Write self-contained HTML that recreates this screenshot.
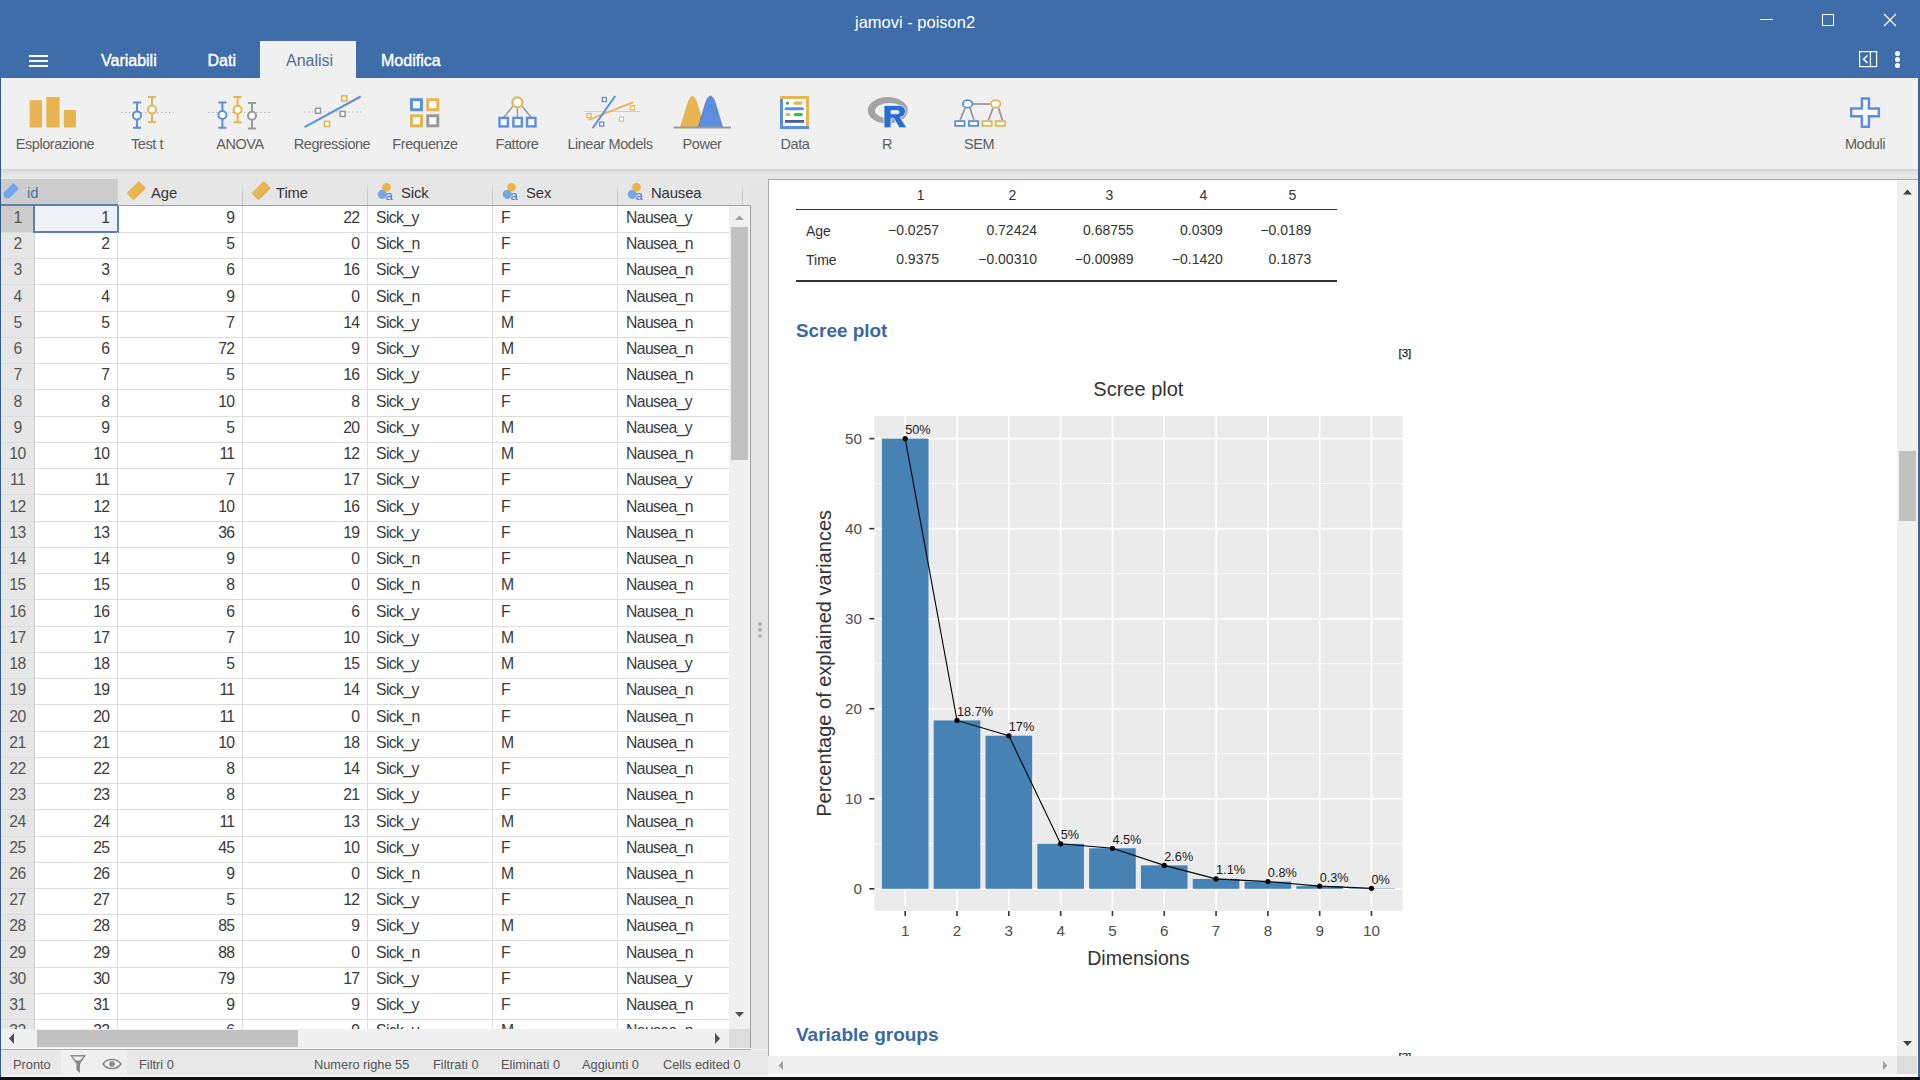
<!DOCTYPE html>
<html><head><meta charset="utf-8"><title>jamovi - poison2</title>
<style>
*{box-sizing:border-box;margin:0;padding:0}
html,body{width:1920px;height:1080px;overflow:hidden;background:#f0f0f0;font-family:"Liberation Sans",sans-serif;}
.a{position:absolute}
.t{position:absolute;white-space:pre;line-height:1}
</style></head><body>

<div class="a" style="left:0;top:0;width:1920px;height:78px;background:#3e6da9"></div>
<div class="t" style="left:855px;top:13.5px;font-size:16.5px;color:#fff">jamovi - poison2</div>
<div class="a" style="left:1760px;top:19px;width:13px;height:1px;background:#fff"></div>
<div class="a" style="left:1822px;top:14px;width:12px;height:12px;border:1px solid #fff"></div>
<svg class="a" style="left:1883px;top:13px" width="14" height="14"><path d="M1 1L13 13M13 1L1 13" stroke="#fff" stroke-width="1.2"/></svg>
<div class="a" style="left:29px;top:55px;width:19px;height:2px;background:#fff"></div>
<div class="a" style="left:29px;top:60px;width:19px;height:2px;background:#fff"></div>
<div class="a" style="left:29px;top:65px;width:19px;height:2px;background:#fff"></div>
<div class="a" style="left:260px;top:41px;width:96px;height:37px;background:#f0f0f0"></div>
<div class="t" style="left:101px;top:53.3px;font-size:16px;-webkit-text-stroke:0.4px #fff;color:#fff">Variabili</div>
<div class="t" style="left:207.5px;top:53.3px;font-size:16px;-webkit-text-stroke:0.4px #fff;color:#fff">Dati</div>
<div class="t" style="left:286px;top:53.3px;font-size:16px;color:#4f6d99">Analisi</div>
<div class="t" style="left:381px;top:53.3px;font-size:16px;-webkit-text-stroke:0.4px #fff;color:#fff">Modifica</div>
<svg class="a" style="left:1858px;top:50px" width="20" height="18"><rect x="1.6" y="1.6" width="17" height="15" fill="none" stroke="#fff" stroke-width="1.2"/><path d="M12.4 1.6V16.6" stroke="#fff" stroke-width="1.2"/><path d="M9.5 5.5L5.5 9.2L9.5 12.9" fill="none" stroke="#fff" stroke-width="1.5"/></svg>
<div class="a" style="left:1895px;top:51px;width:5px;height:5px;border-radius:50%;background:#fff"></div>
<div class="a" style="left:1895px;top:57px;width:5px;height:5px;border-radius:50%;background:#fff"></div>
<div class="a" style="left:1895px;top:63px;width:5px;height:5px;border-radius:50%;background:#fff"></div>
<div class="a" style="left:0;top:78px;width:1920px;height:91px;background:#f0f0f0"></div>
<div class="a" style="left:0;top:169px;width:1920px;height:10px;background:linear-gradient(#d2d2d2 0px,#e6e6e6 5px,#e6e6e6 10px)"></div>
<div class="t" style="left:-5px;width:120px;text-align:center;top:136.5px;font-size:14.5px;letter-spacing:-0.45px;color:#5e5e5e">Esplorazione</div>
<div class="t" style="left:87px;width:120px;text-align:center;top:136.5px;font-size:14.5px;letter-spacing:-0.45px;color:#5e5e5e">Test t</div>
<div class="t" style="left:180px;width:120px;text-align:center;top:136.5px;font-size:14.5px;letter-spacing:-0.45px;color:#5e5e5e">ANOVA</div>
<div class="t" style="left:272px;width:120px;text-align:center;top:136.5px;font-size:14.5px;letter-spacing:-0.45px;color:#5e5e5e">Regressione</div>
<div class="t" style="left:365px;width:120px;text-align:center;top:136.5px;font-size:14.5px;letter-spacing:-0.45px;color:#5e5e5e">Frequenze</div>
<div class="t" style="left:457px;width:120px;text-align:center;top:136.5px;font-size:14.5px;letter-spacing:-0.45px;color:#5e5e5e">Fattore</div>
<div class="t" style="left:550px;width:120px;text-align:center;top:136.5px;font-size:14.5px;letter-spacing:-0.45px;color:#5e5e5e">Linear Models</div>
<div class="t" style="left:642px;width:120px;text-align:center;top:136.5px;font-size:14.5px;letter-spacing:-0.45px;color:#5e5e5e">Power</div>
<div class="t" style="left:735px;width:120px;text-align:center;top:136.5px;font-size:14.5px;letter-spacing:-0.45px;color:#5e5e5e">Data</div>
<div class="t" style="left:827px;width:120px;text-align:center;top:136.5px;font-size:14.5px;letter-spacing:-0.45px;color:#5e5e5e">R</div>
<div class="t" style="left:919px;width:120px;text-align:center;top:136.5px;font-size:14.5px;letter-spacing:-0.45px;color:#5e5e5e">SEM</div>
<div class="t" style="left:1805px;width:120px;text-align:center;top:136.5px;font-size:14.5px;letter-spacing:-0.45px;color:#5e5e5e">Moduli</div>
<svg class="a" style="left:0;top:0" width="1920" height="170"><rect x="29.6" y="100.2" width="12.4" height="27.3" fill="#e8b452"/><rect x="46.3" y="97" width="13.3" height="30.5" fill="#e8b452"/><rect x="63.8" y="110" width="12.2" height="17.5" fill="#e8b452"/><path d="M121 112.5H174" stroke="#b8b8b8" stroke-width="1" stroke-dasharray="1.5 2.5"/><path d="M133 102.5H141M137 102.5V111.4M137 119.4V127.7M133 127.7H141" stroke="#5b8fdd" stroke-width="2" fill="none"/><circle cx="137" cy="115.4" r="4" stroke="#5b8fdd" stroke-width="2" fill="#fff"/><path d="M148 97H156M152 97V105.6M152 113.6V122M148 122H156" stroke="#e8b452" stroke-width="2" fill="none"/><circle cx="152" cy="109.6" r="4" stroke="#e8b452" stroke-width="2" fill="#fff"/><path d="M208 112.5H270" stroke="#b8b8b8" stroke-width="1" stroke-dasharray="1.5 2.5"/><path d="M218.4 102.6H226.4M222.4 102.6V111M222.4 119V127.8M218.4 127.8H226.4" stroke="#5b8fdd" stroke-width="2" fill="none"/><circle cx="222.4" cy="115" r="4" stroke="#5b8fdd" stroke-width="2" fill="#fff"/><path d="M233.6 97H241.6M237.6 97V105.7M237.6 113.7V122.3M233.6 122.3H241.6" stroke="#e8b452" stroke-width="2" fill="none"/><circle cx="237.6" cy="109.7" r="4" stroke="#e8b452" stroke-width="2" fill="#fff"/><path d="M248 103H256M252 103V111.8M252 119.8V128.4M248 128.4H256" stroke="#9a9a9a" stroke-width="2" fill="none"/><circle cx="252" cy="115.8" r="4" stroke="#9a9a9a" stroke-width="2" fill="#fff"/><path d="M304 112H362" stroke="#b8b8b8" stroke-width="1" stroke-dasharray="1.5 2.5"/><path d="M304.6 127.1L360.7 96.5" stroke="#5b8fdd" stroke-width="2"/><rect x="315.5" y="108.3" width="5" height="5" fill="#fff" stroke="#9a9a9a" stroke-width="1.6"/><rect x="340.1" y="111.4" width="5" height="5" fill="#fff" stroke="#9a9a9a" stroke-width="1.6"/><rect x="341.8" y="95.9" width="5" height="5" fill="#fff" stroke="#e8b452" stroke-width="1.6"/><rect x="324.5" y="121.4" width="5" height="5" fill="#fff" stroke="#e8b452" stroke-width="1.6"/><rect x="411.5" y="99.7" width="10" height="10" fill="#fff" stroke="#5b8fdd" stroke-width="3"/><rect x="427.8" y="99.7" width="10" height="10" fill="#fff" stroke="#e8b452" stroke-width="3"/><rect x="411.5" y="115.8" width="10" height="10" fill="#fff" stroke="#e8b452" stroke-width="3"/><rect x="427.8" y="115.8" width="10" height="10" fill="#fff" stroke="#9a9a9a" stroke-width="3"/><path d="M513 106L503.7 117.5M517.4 108V117.5M522 106L531.2 117.5" stroke="#9a9a9a" stroke-width="1.5"/><circle cx="517.4" cy="102.3" r="5" fill="#fff" stroke="#e8b452" stroke-width="2.2"/><rect x="499.5" y="117.9" width="8.4" height="8.5" fill="#fff" stroke="#5b8fdd" stroke-width="2.4"/><rect x="513.4000000000001" y="117.9" width="8.4" height="8.5" fill="#fff" stroke="#5b8fdd" stroke-width="2.4"/><rect x="527.1" y="117.9" width="8.4" height="8.5" fill="#fff" stroke="#5b8fdd" stroke-width="2.4"/><path d="M584 111.5H640" stroke="#cfcfcf" stroke-width="1"/><path d="M588.3 120L633 102.3" stroke="#e8b452" stroke-width="1.8" fill="none"/><path d="M592.6 128.2L615.2 96" stroke="#5b8fdd" stroke-width="2"/><rect x="602.3" y="97.5" width="4" height="4" fill="#fff" stroke="#5b8fdd" stroke-width="1.3"/><rect x="599.7" y="122.1" width="4" height="4" fill="#fff" stroke="#5b8fdd" stroke-width="1.3"/><rect x="587.1" y="113.6" width="4" height="4" fill="#fff" stroke="#e8b452" stroke-width="1.3"/><rect x="630.4" y="105.8" width="4" height="4" fill="#fff" stroke="#e8b452" stroke-width="1.3"/><rect x="619.5" y="117.1" width="4" height="4" fill="#fff" stroke="#c4c4c4" stroke-width="1.3"/><path d="M679.8 127.5C686 110 688 96 692.4 96S699 110 705 127.5Z" fill="#e8b452"/><path d="M698 127.5C704 110 706 96 710.4 96S717 110 722.8 127.5Z" fill="#5b8fdd" stroke="#4a74b8" stroke-width="0.6"/><path d="M673.7 127.6H731" stroke="#999" stroke-width="2"/><rect x="781.5" y="97.5" width="26" height="30" fill="#fff"/><path d="M781.5 96V127.5H809" stroke="#5b8fdd" stroke-width="3" fill="none"/><path d="M780 97.5H807.5V126" stroke="#e8b452" stroke-width="3" fill="none"/><circle cx="787.5" cy="103.2" r="1.6" fill="#3aa845"/><rect x="793.5" y="101.6" width="9" height="3.2" rx="1.6" fill="#e8b452"/><rect x="784.5" y="107.2" width="19.5" height="3" rx="1.5" fill="#5b8fdd"/><rect x="785.5" y="113" width="5" height="3.2" rx="1.6" fill="#e8b452"/><rect x="793.8" y="113" width="9" height="3.2" rx="1.6" fill="#2fbf3f"/><rect x="785" y="120" width="19" height="2.8" fill="#4b5a9e"/><path d="M867.8 110.3A20 13.3 0 1 0 907.8 110.3A20 13.3 0 1 0 867.8 110.3ZM875 110.8A14.7 7.8 0 1 0 904.4 110.8A14.7 7.8 0 1 0 875 110.8Z" fill="#a3a3a3" fill-rule="evenodd"/><path d="M884 127.8V105.4H898.5C903.5 105.4 905.5 108.2 905.5 111.3S903.8 116.5 900.2 117.3L906.8 127.8H899.3L893.6 118.3H891V127.8Z M891 110.5V113.8H897C898.3 113.8 899.1 113 899.1 112.1S898.3 110.5 897 110.5Z" fill="#276dd8" fill-rule="evenodd" stroke="#f4f4f4" stroke-width="0.8"/><path d="M973 104H990" stroke="#9a9a9a" stroke-width="1.8"/><path d="M965 108L960.2 120M970 108L974 120M993 108L988.5 120M998.5 108L1002.4 120" stroke="#9a9a9a" stroke-width="1.8"/><ellipse cx="967.6" cy="103.9" rx="4.7" ry="3.8" fill="#fff" stroke="#5b8fdd" stroke-width="1.8"/><ellipse cx="995.7" cy="103.9" rx="4.7" ry="3.8" fill="#fff" stroke="#e8b452" stroke-width="1.8"/><rect x="955.1999999999999" y="121.1" width="9.3" height="4.8" fill="#fff" stroke="#5b8fdd" stroke-width="1.8"/><rect x="968.9" y="121.1" width="9.3" height="4.8" fill="#fff" stroke="#5b8fdd" stroke-width="1.8"/><rect x="982.4" y="121.1" width="9.3" height="4.8" fill="#fff" stroke="#e8b452" stroke-width="1.8"/><rect x="995.6999999999999" y="121.1" width="9.3" height="4.8" fill="#fff" stroke="#e8b452" stroke-width="1.8"/><path d="M1861.9 98.5H1868.9V108.5H1878.8V116.3H1868.9V126.7H1861.9V116.3H1851.2V108.5H1861.9Z" fill="#fff" stroke="#5b8fdd" stroke-width="2.5"/></svg>
<div class="a" style="left:0;top:179px;width:768px;height:870px;background:#e6e6e6"></div>
<div class="a" style="left:0;top:179px;width:118px;height:25px;background:#cccccc"></div>
<div class="a" style="left:0;top:204px;width:118px;height:2px;background:#5b80b2"></div>
<div class="a" style="left:118px;top:205px;width:633px;height:1px;background:#a0a0a0"></div>
<div class="a" style="left:242px;top:184px;width:1px;height:21px;background:linear-gradient(#e6e6e6,#c8c8c8 40%)"></div>
<div class="a" style="left:367px;top:184px;width:1px;height:21px;background:linear-gradient(#e6e6e6,#c8c8c8 40%)"></div>
<div class="a" style="left:492px;top:184px;width:1px;height:21px;background:linear-gradient(#e6e6e6,#c8c8c8 40%)"></div>
<div class="a" style="left:617px;top:184px;width:1px;height:21px;background:linear-gradient(#e6e6e6,#c8c8c8 40%)"></div>
<div class="a" style="left:742px;top:184px;width:1px;height:21px;background:linear-gradient(#e6e6e6,#c8c8c8 40%)"></div>
<div class="t" style="left:27px;top:186px;font-size:14.8px;letter-spacing:-0.1px;color:#4a6fa5">id</div>
<div class="t" style="left:151px;top:186px;font-size:14.8px;letter-spacing:-0.1px;color:#333">Age</div>
<div class="t" style="left:276px;top:186px;font-size:14.8px;letter-spacing:-0.1px;color:#333">Time</div>
<div class="t" style="left:401px;top:186px;font-size:14.8px;letter-spacing:-0.1px;color:#333">Sick</div>
<div class="t" style="left:526px;top:186px;font-size:14.8px;letter-spacing:-0.1px;color:#333">Sex</div>
<div class="t" style="left:651px;top:186px;font-size:14.8px;letter-spacing:-0.1px;color:#333">Nausea</div>
<svg class="a" style="left:0;top:0" width="760" height="210"><path d="M3.7 192.7L13.3 183L19 188.5L9.5 198.2L6 198.2L3.7 195.8Z" fill="#72a2ea"/><g transform="rotate(45 136.2 190.7)"><rect x="131.6" y="182.39999999999998" width="9.2" height="16.6" rx="0.8" fill="#e9b650" stroke="#dba443" stroke-width="0.8"/><path d="M140.79999999999998 185.7h-2.5M140.79999999999998 188.7h-1.6M140.79999999999998 191.7h-2.5M140.79999999999998 194.7h-1.6" stroke="#c8933a" stroke-width="0.7"/></g><g transform="rotate(45 261.2 190.7)"><rect x="256.59999999999997" y="182.39999999999998" width="9.2" height="16.6" rx="0.8" fill="#e9b650" stroke="#dba443" stroke-width="0.8"/><path d="M265.8 185.7h-2.5M265.8 188.7h-1.6M265.8 191.7h-2.5M265.8 194.7h-1.6" stroke="#c8933a" stroke-width="0.7"/></g><circle cx="382.3" cy="194.3" r="4.6" fill="#79a6e3"/><circle cx="386.5" cy="187.2" r="4.3" fill="#e9b546"/><text x="385.5" y="199.5" font-family="Liberation Sans" font-size="13" fill="#4a7bc8">a</text><circle cx="507.3" cy="194.3" r="4.6" fill="#79a6e3"/><circle cx="511.5" cy="187.2" r="4.3" fill="#e9b546"/><text x="510.5" y="199.5" font-family="Liberation Sans" font-size="13" fill="#4a7bc8">a</text><circle cx="632.3" cy="194.3" r="4.6" fill="#79a6e3"/><circle cx="636.5" cy="187.2" r="4.3" fill="#e9b546"/><text x="635.5" y="199.5" font-family="Liberation Sans" font-size="13" fill="#4a7bc8">a</text></svg>
<div class="a" style="left:0;top:206px;width:729px;height:823px;overflow:hidden;background:#fff"><div class="a" style="left:0;top:0;width:34px;height:823px;background:#e6e6e6"></div><div class="a" style="left:0;top:26px;width:729px;height:1px;background:#dcdcdc"></div><div class="a" style="left:0;top:0;width:34px;height:26px;background:#cccccc"></div><div class="a" style="left:33px;top:-2px;width:86px;height:29px;border:2px solid #5b80b2;border-top:none;background:#eef2f8"></div><div class="t" style="left:0;width:35px;text-align:center;top:4px;font-size:15.75px;letter-spacing:-0.62px;color:#555">1</div><div class="t" style="left:34px;width:75.5px;text-align:right;top:4px;font-size:15.75px;letter-spacing:-0.62px;color:#3a3a3a">1</div><div class="t" style="left:118px;width:116.5px;text-align:right;top:4px;font-size:15.75px;letter-spacing:-0.62px;color:#3a3a3a">9</div><div class="t" style="left:243px;width:116.5px;text-align:right;top:4px;font-size:15.75px;letter-spacing:-0.62px;color:#3a3a3a">22</div><div class="t" style="left:376px;top:4px;font-size:15.75px;letter-spacing:-0.62px;color:#3a3a3a">Sick_y</div><div class="t" style="left:501px;top:4px;font-size:15.75px;letter-spacing:-0.62px;color:#3a3a3a">F</div><div class="t" style="left:626px;top:4px;font-size:15.75px;letter-spacing:-0.62px;color:#3a3a3a">Nausea_y</div><div class="a" style="left:0;top:52px;width:729px;height:1px;background:#dcdcdc"></div><div class="t" style="left:0;width:35px;text-align:center;top:30px;font-size:15.75px;letter-spacing:-0.62px;color:#555">2</div><div class="t" style="left:34px;width:75.5px;text-align:right;top:30px;font-size:15.75px;letter-spacing:-0.62px;color:#3a3a3a">2</div><div class="t" style="left:118px;width:116.5px;text-align:right;top:30px;font-size:15.75px;letter-spacing:-0.62px;color:#3a3a3a">5</div><div class="t" style="left:243px;width:116.5px;text-align:right;top:30px;font-size:15.75px;letter-spacing:-0.62px;color:#3a3a3a">0</div><div class="t" style="left:376px;top:30px;font-size:15.75px;letter-spacing:-0.62px;color:#3a3a3a">Sick_n</div><div class="t" style="left:501px;top:30px;font-size:15.75px;letter-spacing:-0.62px;color:#3a3a3a">F</div><div class="t" style="left:626px;top:30px;font-size:15.75px;letter-spacing:-0.62px;color:#3a3a3a">Nausea_n</div><div class="a" style="left:0;top:78px;width:729px;height:1px;background:#dcdcdc"></div><div class="t" style="left:0;width:35px;text-align:center;top:56px;font-size:15.75px;letter-spacing:-0.62px;color:#555">3</div><div class="t" style="left:34px;width:75.5px;text-align:right;top:56px;font-size:15.75px;letter-spacing:-0.62px;color:#3a3a3a">3</div><div class="t" style="left:118px;width:116.5px;text-align:right;top:56px;font-size:15.75px;letter-spacing:-0.62px;color:#3a3a3a">6</div><div class="t" style="left:243px;width:116.5px;text-align:right;top:56px;font-size:15.75px;letter-spacing:-0.62px;color:#3a3a3a">16</div><div class="t" style="left:376px;top:56px;font-size:15.75px;letter-spacing:-0.62px;color:#3a3a3a">Sick_y</div><div class="t" style="left:501px;top:56px;font-size:15.75px;letter-spacing:-0.62px;color:#3a3a3a">F</div><div class="t" style="left:626px;top:56px;font-size:15.75px;letter-spacing:-0.62px;color:#3a3a3a">Nausea_n</div><div class="a" style="left:0;top:105px;width:729px;height:1px;background:#dcdcdc"></div><div class="t" style="left:0;width:35px;text-align:center;top:83px;font-size:15.75px;letter-spacing:-0.62px;color:#555">4</div><div class="t" style="left:34px;width:75.5px;text-align:right;top:83px;font-size:15.75px;letter-spacing:-0.62px;color:#3a3a3a">4</div><div class="t" style="left:118px;width:116.5px;text-align:right;top:83px;font-size:15.75px;letter-spacing:-0.62px;color:#3a3a3a">9</div><div class="t" style="left:243px;width:116.5px;text-align:right;top:83px;font-size:15.75px;letter-spacing:-0.62px;color:#3a3a3a">0</div><div class="t" style="left:376px;top:83px;font-size:15.75px;letter-spacing:-0.62px;color:#3a3a3a">Sick_n</div><div class="t" style="left:501px;top:83px;font-size:15.75px;letter-spacing:-0.62px;color:#3a3a3a">F</div><div class="t" style="left:626px;top:83px;font-size:15.75px;letter-spacing:-0.62px;color:#3a3a3a">Nausea_n</div><div class="a" style="left:0;top:131px;width:729px;height:1px;background:#dcdcdc"></div><div class="t" style="left:0;width:35px;text-align:center;top:109px;font-size:15.75px;letter-spacing:-0.62px;color:#555">5</div><div class="t" style="left:34px;width:75.5px;text-align:right;top:109px;font-size:15.75px;letter-spacing:-0.62px;color:#3a3a3a">5</div><div class="t" style="left:118px;width:116.5px;text-align:right;top:109px;font-size:15.75px;letter-spacing:-0.62px;color:#3a3a3a">7</div><div class="t" style="left:243px;width:116.5px;text-align:right;top:109px;font-size:15.75px;letter-spacing:-0.62px;color:#3a3a3a">14</div><div class="t" style="left:376px;top:109px;font-size:15.75px;letter-spacing:-0.62px;color:#3a3a3a">Sick_y</div><div class="t" style="left:501px;top:109px;font-size:15.75px;letter-spacing:-0.62px;color:#3a3a3a">M</div><div class="t" style="left:626px;top:109px;font-size:15.75px;letter-spacing:-0.62px;color:#3a3a3a">Nausea_n</div><div class="a" style="left:0;top:157px;width:729px;height:1px;background:#dcdcdc"></div><div class="t" style="left:0;width:35px;text-align:center;top:135px;font-size:15.75px;letter-spacing:-0.62px;color:#555">6</div><div class="t" style="left:34px;width:75.5px;text-align:right;top:135px;font-size:15.75px;letter-spacing:-0.62px;color:#3a3a3a">6</div><div class="t" style="left:118px;width:116.5px;text-align:right;top:135px;font-size:15.75px;letter-spacing:-0.62px;color:#3a3a3a">72</div><div class="t" style="left:243px;width:116.5px;text-align:right;top:135px;font-size:15.75px;letter-spacing:-0.62px;color:#3a3a3a">9</div><div class="t" style="left:376px;top:135px;font-size:15.75px;letter-spacing:-0.62px;color:#3a3a3a">Sick_y</div><div class="t" style="left:501px;top:135px;font-size:15.75px;letter-spacing:-0.62px;color:#3a3a3a">M</div><div class="t" style="left:626px;top:135px;font-size:15.75px;letter-spacing:-0.62px;color:#3a3a3a">Nausea_n</div><div class="a" style="left:0;top:183px;width:729px;height:1px;background:#dcdcdc"></div><div class="t" style="left:0;width:35px;text-align:center;top:161px;font-size:15.75px;letter-spacing:-0.62px;color:#555">7</div><div class="t" style="left:34px;width:75.5px;text-align:right;top:161px;font-size:15.75px;letter-spacing:-0.62px;color:#3a3a3a">7</div><div class="t" style="left:118px;width:116.5px;text-align:right;top:161px;font-size:15.75px;letter-spacing:-0.62px;color:#3a3a3a">5</div><div class="t" style="left:243px;width:116.5px;text-align:right;top:161px;font-size:15.75px;letter-spacing:-0.62px;color:#3a3a3a">16</div><div class="t" style="left:376px;top:161px;font-size:15.75px;letter-spacing:-0.62px;color:#3a3a3a">Sick_y</div><div class="t" style="left:501px;top:161px;font-size:15.75px;letter-spacing:-0.62px;color:#3a3a3a">F</div><div class="t" style="left:626px;top:161px;font-size:15.75px;letter-spacing:-0.62px;color:#3a3a3a">Nausea_n</div><div class="a" style="left:0;top:210px;width:729px;height:1px;background:#dcdcdc"></div><div class="t" style="left:0;width:35px;text-align:center;top:188px;font-size:15.75px;letter-spacing:-0.62px;color:#555">8</div><div class="t" style="left:34px;width:75.5px;text-align:right;top:188px;font-size:15.75px;letter-spacing:-0.62px;color:#3a3a3a">8</div><div class="t" style="left:118px;width:116.5px;text-align:right;top:188px;font-size:15.75px;letter-spacing:-0.62px;color:#3a3a3a">10</div><div class="t" style="left:243px;width:116.5px;text-align:right;top:188px;font-size:15.75px;letter-spacing:-0.62px;color:#3a3a3a">8</div><div class="t" style="left:376px;top:188px;font-size:15.75px;letter-spacing:-0.62px;color:#3a3a3a">Sick_y</div><div class="t" style="left:501px;top:188px;font-size:15.75px;letter-spacing:-0.62px;color:#3a3a3a">F</div><div class="t" style="left:626px;top:188px;font-size:15.75px;letter-spacing:-0.62px;color:#3a3a3a">Nausea_y</div><div class="a" style="left:0;top:236px;width:729px;height:1px;background:#dcdcdc"></div><div class="t" style="left:0;width:35px;text-align:center;top:214px;font-size:15.75px;letter-spacing:-0.62px;color:#555">9</div><div class="t" style="left:34px;width:75.5px;text-align:right;top:214px;font-size:15.75px;letter-spacing:-0.62px;color:#3a3a3a">9</div><div class="t" style="left:118px;width:116.5px;text-align:right;top:214px;font-size:15.75px;letter-spacing:-0.62px;color:#3a3a3a">5</div><div class="t" style="left:243px;width:116.5px;text-align:right;top:214px;font-size:15.75px;letter-spacing:-0.62px;color:#3a3a3a">20</div><div class="t" style="left:376px;top:214px;font-size:15.75px;letter-spacing:-0.62px;color:#3a3a3a">Sick_y</div><div class="t" style="left:501px;top:214px;font-size:15.75px;letter-spacing:-0.62px;color:#3a3a3a">M</div><div class="t" style="left:626px;top:214px;font-size:15.75px;letter-spacing:-0.62px;color:#3a3a3a">Nausea_y</div><div class="a" style="left:0;top:262px;width:729px;height:1px;background:#dcdcdc"></div><div class="t" style="left:0;width:35px;text-align:center;top:240px;font-size:15.75px;letter-spacing:-0.62px;color:#555">10</div><div class="t" style="left:34px;width:75.5px;text-align:right;top:240px;font-size:15.75px;letter-spacing:-0.62px;color:#3a3a3a">10</div><div class="t" style="left:118px;width:116.5px;text-align:right;top:240px;font-size:15.75px;letter-spacing:-0.62px;color:#3a3a3a">11</div><div class="t" style="left:243px;width:116.5px;text-align:right;top:240px;font-size:15.75px;letter-spacing:-0.62px;color:#3a3a3a">12</div><div class="t" style="left:376px;top:240px;font-size:15.75px;letter-spacing:-0.62px;color:#3a3a3a">Sick_y</div><div class="t" style="left:501px;top:240px;font-size:15.75px;letter-spacing:-0.62px;color:#3a3a3a">M</div><div class="t" style="left:626px;top:240px;font-size:15.75px;letter-spacing:-0.62px;color:#3a3a3a">Nausea_n</div><div class="a" style="left:0;top:288px;width:729px;height:1px;background:#dcdcdc"></div><div class="t" style="left:0;width:35px;text-align:center;top:266px;font-size:15.75px;letter-spacing:-0.62px;color:#555">11</div><div class="t" style="left:34px;width:75.5px;text-align:right;top:266px;font-size:15.75px;letter-spacing:-0.62px;color:#3a3a3a">11</div><div class="t" style="left:118px;width:116.5px;text-align:right;top:266px;font-size:15.75px;letter-spacing:-0.62px;color:#3a3a3a">7</div><div class="t" style="left:243px;width:116.5px;text-align:right;top:266px;font-size:15.75px;letter-spacing:-0.62px;color:#3a3a3a">17</div><div class="t" style="left:376px;top:266px;font-size:15.75px;letter-spacing:-0.62px;color:#3a3a3a">Sick_y</div><div class="t" style="left:501px;top:266px;font-size:15.75px;letter-spacing:-0.62px;color:#3a3a3a">F</div><div class="t" style="left:626px;top:266px;font-size:15.75px;letter-spacing:-0.62px;color:#3a3a3a">Nausea_y</div><div class="a" style="left:0;top:315px;width:729px;height:1px;background:#dcdcdc"></div><div class="t" style="left:0;width:35px;text-align:center;top:293px;font-size:15.75px;letter-spacing:-0.62px;color:#555">12</div><div class="t" style="left:34px;width:75.5px;text-align:right;top:293px;font-size:15.75px;letter-spacing:-0.62px;color:#3a3a3a">12</div><div class="t" style="left:118px;width:116.5px;text-align:right;top:293px;font-size:15.75px;letter-spacing:-0.62px;color:#3a3a3a">10</div><div class="t" style="left:243px;width:116.5px;text-align:right;top:293px;font-size:15.75px;letter-spacing:-0.62px;color:#3a3a3a">16</div><div class="t" style="left:376px;top:293px;font-size:15.75px;letter-spacing:-0.62px;color:#3a3a3a">Sick_y</div><div class="t" style="left:501px;top:293px;font-size:15.75px;letter-spacing:-0.62px;color:#3a3a3a">F</div><div class="t" style="left:626px;top:293px;font-size:15.75px;letter-spacing:-0.62px;color:#3a3a3a">Nausea_n</div><div class="a" style="left:0;top:341px;width:729px;height:1px;background:#dcdcdc"></div><div class="t" style="left:0;width:35px;text-align:center;top:319px;font-size:15.75px;letter-spacing:-0.62px;color:#555">13</div><div class="t" style="left:34px;width:75.5px;text-align:right;top:319px;font-size:15.75px;letter-spacing:-0.62px;color:#3a3a3a">13</div><div class="t" style="left:118px;width:116.5px;text-align:right;top:319px;font-size:15.75px;letter-spacing:-0.62px;color:#3a3a3a">36</div><div class="t" style="left:243px;width:116.5px;text-align:right;top:319px;font-size:15.75px;letter-spacing:-0.62px;color:#3a3a3a">19</div><div class="t" style="left:376px;top:319px;font-size:15.75px;letter-spacing:-0.62px;color:#3a3a3a">Sick_y</div><div class="t" style="left:501px;top:319px;font-size:15.75px;letter-spacing:-0.62px;color:#3a3a3a">F</div><div class="t" style="left:626px;top:319px;font-size:15.75px;letter-spacing:-0.62px;color:#3a3a3a">Nausea_n</div><div class="a" style="left:0;top:367px;width:729px;height:1px;background:#dcdcdc"></div><div class="t" style="left:0;width:35px;text-align:center;top:345px;font-size:15.75px;letter-spacing:-0.62px;color:#555">14</div><div class="t" style="left:34px;width:75.5px;text-align:right;top:345px;font-size:15.75px;letter-spacing:-0.62px;color:#3a3a3a">14</div><div class="t" style="left:118px;width:116.5px;text-align:right;top:345px;font-size:15.75px;letter-spacing:-0.62px;color:#3a3a3a">9</div><div class="t" style="left:243px;width:116.5px;text-align:right;top:345px;font-size:15.75px;letter-spacing:-0.62px;color:#3a3a3a">0</div><div class="t" style="left:376px;top:345px;font-size:15.75px;letter-spacing:-0.62px;color:#3a3a3a">Sick_n</div><div class="t" style="left:501px;top:345px;font-size:15.75px;letter-spacing:-0.62px;color:#3a3a3a">F</div><div class="t" style="left:626px;top:345px;font-size:15.75px;letter-spacing:-0.62px;color:#3a3a3a">Nausea_n</div><div class="a" style="left:0;top:393px;width:729px;height:1px;background:#dcdcdc"></div><div class="t" style="left:0;width:35px;text-align:center;top:371px;font-size:15.75px;letter-spacing:-0.62px;color:#555">15</div><div class="t" style="left:34px;width:75.5px;text-align:right;top:371px;font-size:15.75px;letter-spacing:-0.62px;color:#3a3a3a">15</div><div class="t" style="left:118px;width:116.5px;text-align:right;top:371px;font-size:15.75px;letter-spacing:-0.62px;color:#3a3a3a">8</div><div class="t" style="left:243px;width:116.5px;text-align:right;top:371px;font-size:15.75px;letter-spacing:-0.62px;color:#3a3a3a">0</div><div class="t" style="left:376px;top:371px;font-size:15.75px;letter-spacing:-0.62px;color:#3a3a3a">Sick_n</div><div class="t" style="left:501px;top:371px;font-size:15.75px;letter-spacing:-0.62px;color:#3a3a3a">M</div><div class="t" style="left:626px;top:371px;font-size:15.75px;letter-spacing:-0.62px;color:#3a3a3a">Nausea_n</div><div class="a" style="left:0;top:420px;width:729px;height:1px;background:#dcdcdc"></div><div class="t" style="left:0;width:35px;text-align:center;top:398px;font-size:15.75px;letter-spacing:-0.62px;color:#555">16</div><div class="t" style="left:34px;width:75.5px;text-align:right;top:398px;font-size:15.75px;letter-spacing:-0.62px;color:#3a3a3a">16</div><div class="t" style="left:118px;width:116.5px;text-align:right;top:398px;font-size:15.75px;letter-spacing:-0.62px;color:#3a3a3a">6</div><div class="t" style="left:243px;width:116.5px;text-align:right;top:398px;font-size:15.75px;letter-spacing:-0.62px;color:#3a3a3a">6</div><div class="t" style="left:376px;top:398px;font-size:15.75px;letter-spacing:-0.62px;color:#3a3a3a">Sick_y</div><div class="t" style="left:501px;top:398px;font-size:15.75px;letter-spacing:-0.62px;color:#3a3a3a">F</div><div class="t" style="left:626px;top:398px;font-size:15.75px;letter-spacing:-0.62px;color:#3a3a3a">Nausea_n</div><div class="a" style="left:0;top:446px;width:729px;height:1px;background:#dcdcdc"></div><div class="t" style="left:0;width:35px;text-align:center;top:424px;font-size:15.75px;letter-spacing:-0.62px;color:#555">17</div><div class="t" style="left:34px;width:75.5px;text-align:right;top:424px;font-size:15.75px;letter-spacing:-0.62px;color:#3a3a3a">17</div><div class="t" style="left:118px;width:116.5px;text-align:right;top:424px;font-size:15.75px;letter-spacing:-0.62px;color:#3a3a3a">7</div><div class="t" style="left:243px;width:116.5px;text-align:right;top:424px;font-size:15.75px;letter-spacing:-0.62px;color:#3a3a3a">10</div><div class="t" style="left:376px;top:424px;font-size:15.75px;letter-spacing:-0.62px;color:#3a3a3a">Sick_y</div><div class="t" style="left:501px;top:424px;font-size:15.75px;letter-spacing:-0.62px;color:#3a3a3a">M</div><div class="t" style="left:626px;top:424px;font-size:15.75px;letter-spacing:-0.62px;color:#3a3a3a">Nausea_n</div><div class="a" style="left:0;top:472px;width:729px;height:1px;background:#dcdcdc"></div><div class="t" style="left:0;width:35px;text-align:center;top:450px;font-size:15.75px;letter-spacing:-0.62px;color:#555">18</div><div class="t" style="left:34px;width:75.5px;text-align:right;top:450px;font-size:15.75px;letter-spacing:-0.62px;color:#3a3a3a">18</div><div class="t" style="left:118px;width:116.5px;text-align:right;top:450px;font-size:15.75px;letter-spacing:-0.62px;color:#3a3a3a">5</div><div class="t" style="left:243px;width:116.5px;text-align:right;top:450px;font-size:15.75px;letter-spacing:-0.62px;color:#3a3a3a">15</div><div class="t" style="left:376px;top:450px;font-size:15.75px;letter-spacing:-0.62px;color:#3a3a3a">Sick_y</div><div class="t" style="left:501px;top:450px;font-size:15.75px;letter-spacing:-0.62px;color:#3a3a3a">M</div><div class="t" style="left:626px;top:450px;font-size:15.75px;letter-spacing:-0.62px;color:#3a3a3a">Nausea_y</div><div class="a" style="left:0;top:498px;width:729px;height:1px;background:#dcdcdc"></div><div class="t" style="left:0;width:35px;text-align:center;top:476px;font-size:15.75px;letter-spacing:-0.62px;color:#555">19</div><div class="t" style="left:34px;width:75.5px;text-align:right;top:476px;font-size:15.75px;letter-spacing:-0.62px;color:#3a3a3a">19</div><div class="t" style="left:118px;width:116.5px;text-align:right;top:476px;font-size:15.75px;letter-spacing:-0.62px;color:#3a3a3a">11</div><div class="t" style="left:243px;width:116.5px;text-align:right;top:476px;font-size:15.75px;letter-spacing:-0.62px;color:#3a3a3a">14</div><div class="t" style="left:376px;top:476px;font-size:15.75px;letter-spacing:-0.62px;color:#3a3a3a">Sick_y</div><div class="t" style="left:501px;top:476px;font-size:15.75px;letter-spacing:-0.62px;color:#3a3a3a">F</div><div class="t" style="left:626px;top:476px;font-size:15.75px;letter-spacing:-0.62px;color:#3a3a3a">Nausea_n</div><div class="a" style="left:0;top:525px;width:729px;height:1px;background:#dcdcdc"></div><div class="t" style="left:0;width:35px;text-align:center;top:503px;font-size:15.75px;letter-spacing:-0.62px;color:#555">20</div><div class="t" style="left:34px;width:75.5px;text-align:right;top:503px;font-size:15.75px;letter-spacing:-0.62px;color:#3a3a3a">20</div><div class="t" style="left:118px;width:116.5px;text-align:right;top:503px;font-size:15.75px;letter-spacing:-0.62px;color:#3a3a3a">11</div><div class="t" style="left:243px;width:116.5px;text-align:right;top:503px;font-size:15.75px;letter-spacing:-0.62px;color:#3a3a3a">0</div><div class="t" style="left:376px;top:503px;font-size:15.75px;letter-spacing:-0.62px;color:#3a3a3a">Sick_n</div><div class="t" style="left:501px;top:503px;font-size:15.75px;letter-spacing:-0.62px;color:#3a3a3a">F</div><div class="t" style="left:626px;top:503px;font-size:15.75px;letter-spacing:-0.62px;color:#3a3a3a">Nausea_n</div><div class="a" style="left:0;top:551px;width:729px;height:1px;background:#dcdcdc"></div><div class="t" style="left:0;width:35px;text-align:center;top:529px;font-size:15.75px;letter-spacing:-0.62px;color:#555">21</div><div class="t" style="left:34px;width:75.5px;text-align:right;top:529px;font-size:15.75px;letter-spacing:-0.62px;color:#3a3a3a">21</div><div class="t" style="left:118px;width:116.5px;text-align:right;top:529px;font-size:15.75px;letter-spacing:-0.62px;color:#3a3a3a">10</div><div class="t" style="left:243px;width:116.5px;text-align:right;top:529px;font-size:15.75px;letter-spacing:-0.62px;color:#3a3a3a">18</div><div class="t" style="left:376px;top:529px;font-size:15.75px;letter-spacing:-0.62px;color:#3a3a3a">Sick_y</div><div class="t" style="left:501px;top:529px;font-size:15.75px;letter-spacing:-0.62px;color:#3a3a3a">M</div><div class="t" style="left:626px;top:529px;font-size:15.75px;letter-spacing:-0.62px;color:#3a3a3a">Nausea_n</div><div class="a" style="left:0;top:577px;width:729px;height:1px;background:#dcdcdc"></div><div class="t" style="left:0;width:35px;text-align:center;top:555px;font-size:15.75px;letter-spacing:-0.62px;color:#555">22</div><div class="t" style="left:34px;width:75.5px;text-align:right;top:555px;font-size:15.75px;letter-spacing:-0.62px;color:#3a3a3a">22</div><div class="t" style="left:118px;width:116.5px;text-align:right;top:555px;font-size:15.75px;letter-spacing:-0.62px;color:#3a3a3a">8</div><div class="t" style="left:243px;width:116.5px;text-align:right;top:555px;font-size:15.75px;letter-spacing:-0.62px;color:#3a3a3a">14</div><div class="t" style="left:376px;top:555px;font-size:15.75px;letter-spacing:-0.62px;color:#3a3a3a">Sick_y</div><div class="t" style="left:501px;top:555px;font-size:15.75px;letter-spacing:-0.62px;color:#3a3a3a">F</div><div class="t" style="left:626px;top:555px;font-size:15.75px;letter-spacing:-0.62px;color:#3a3a3a">Nausea_n</div><div class="a" style="left:0;top:603px;width:729px;height:1px;background:#dcdcdc"></div><div class="t" style="left:0;width:35px;text-align:center;top:581px;font-size:15.75px;letter-spacing:-0.62px;color:#555">23</div><div class="t" style="left:34px;width:75.5px;text-align:right;top:581px;font-size:15.75px;letter-spacing:-0.62px;color:#3a3a3a">23</div><div class="t" style="left:118px;width:116.5px;text-align:right;top:581px;font-size:15.75px;letter-spacing:-0.62px;color:#3a3a3a">8</div><div class="t" style="left:243px;width:116.5px;text-align:right;top:581px;font-size:15.75px;letter-spacing:-0.62px;color:#3a3a3a">21</div><div class="t" style="left:376px;top:581px;font-size:15.75px;letter-spacing:-0.62px;color:#3a3a3a">Sick_y</div><div class="t" style="left:501px;top:581px;font-size:15.75px;letter-spacing:-0.62px;color:#3a3a3a">F</div><div class="t" style="left:626px;top:581px;font-size:15.75px;letter-spacing:-0.62px;color:#3a3a3a">Nausea_n</div><div class="a" style="left:0;top:630px;width:729px;height:1px;background:#dcdcdc"></div><div class="t" style="left:0;width:35px;text-align:center;top:608px;font-size:15.75px;letter-spacing:-0.62px;color:#555">24</div><div class="t" style="left:34px;width:75.5px;text-align:right;top:608px;font-size:15.75px;letter-spacing:-0.62px;color:#3a3a3a">24</div><div class="t" style="left:118px;width:116.5px;text-align:right;top:608px;font-size:15.75px;letter-spacing:-0.62px;color:#3a3a3a">11</div><div class="t" style="left:243px;width:116.5px;text-align:right;top:608px;font-size:15.75px;letter-spacing:-0.62px;color:#3a3a3a">13</div><div class="t" style="left:376px;top:608px;font-size:15.75px;letter-spacing:-0.62px;color:#3a3a3a">Sick_y</div><div class="t" style="left:501px;top:608px;font-size:15.75px;letter-spacing:-0.62px;color:#3a3a3a">M</div><div class="t" style="left:626px;top:608px;font-size:15.75px;letter-spacing:-0.62px;color:#3a3a3a">Nausea_n</div><div class="a" style="left:0;top:656px;width:729px;height:1px;background:#dcdcdc"></div><div class="t" style="left:0;width:35px;text-align:center;top:634px;font-size:15.75px;letter-spacing:-0.62px;color:#555">25</div><div class="t" style="left:34px;width:75.5px;text-align:right;top:634px;font-size:15.75px;letter-spacing:-0.62px;color:#3a3a3a">25</div><div class="t" style="left:118px;width:116.5px;text-align:right;top:634px;font-size:15.75px;letter-spacing:-0.62px;color:#3a3a3a">45</div><div class="t" style="left:243px;width:116.5px;text-align:right;top:634px;font-size:15.75px;letter-spacing:-0.62px;color:#3a3a3a">10</div><div class="t" style="left:376px;top:634px;font-size:15.75px;letter-spacing:-0.62px;color:#3a3a3a">Sick_y</div><div class="t" style="left:501px;top:634px;font-size:15.75px;letter-spacing:-0.62px;color:#3a3a3a">F</div><div class="t" style="left:626px;top:634px;font-size:15.75px;letter-spacing:-0.62px;color:#3a3a3a">Nausea_n</div><div class="a" style="left:0;top:682px;width:729px;height:1px;background:#dcdcdc"></div><div class="t" style="left:0;width:35px;text-align:center;top:660px;font-size:15.75px;letter-spacing:-0.62px;color:#555">26</div><div class="t" style="left:34px;width:75.5px;text-align:right;top:660px;font-size:15.75px;letter-spacing:-0.62px;color:#3a3a3a">26</div><div class="t" style="left:118px;width:116.5px;text-align:right;top:660px;font-size:15.75px;letter-spacing:-0.62px;color:#3a3a3a">9</div><div class="t" style="left:243px;width:116.5px;text-align:right;top:660px;font-size:15.75px;letter-spacing:-0.62px;color:#3a3a3a">0</div><div class="t" style="left:376px;top:660px;font-size:15.75px;letter-spacing:-0.62px;color:#3a3a3a">Sick_n</div><div class="t" style="left:501px;top:660px;font-size:15.75px;letter-spacing:-0.62px;color:#3a3a3a">M</div><div class="t" style="left:626px;top:660px;font-size:15.75px;letter-spacing:-0.62px;color:#3a3a3a">Nausea_n</div><div class="a" style="left:0;top:708px;width:729px;height:1px;background:#dcdcdc"></div><div class="t" style="left:0;width:35px;text-align:center;top:686px;font-size:15.75px;letter-spacing:-0.62px;color:#555">27</div><div class="t" style="left:34px;width:75.5px;text-align:right;top:686px;font-size:15.75px;letter-spacing:-0.62px;color:#3a3a3a">27</div><div class="t" style="left:118px;width:116.5px;text-align:right;top:686px;font-size:15.75px;letter-spacing:-0.62px;color:#3a3a3a">5</div><div class="t" style="left:243px;width:116.5px;text-align:right;top:686px;font-size:15.75px;letter-spacing:-0.62px;color:#3a3a3a">12</div><div class="t" style="left:376px;top:686px;font-size:15.75px;letter-spacing:-0.62px;color:#3a3a3a">Sick_y</div><div class="t" style="left:501px;top:686px;font-size:15.75px;letter-spacing:-0.62px;color:#3a3a3a">F</div><div class="t" style="left:626px;top:686px;font-size:15.75px;letter-spacing:-0.62px;color:#3a3a3a">Nausea_n</div><div class="a" style="left:0;top:734px;width:729px;height:1px;background:#dcdcdc"></div><div class="t" style="left:0;width:35px;text-align:center;top:712px;font-size:15.75px;letter-spacing:-0.62px;color:#555">28</div><div class="t" style="left:34px;width:75.5px;text-align:right;top:712px;font-size:15.75px;letter-spacing:-0.62px;color:#3a3a3a">28</div><div class="t" style="left:118px;width:116.5px;text-align:right;top:712px;font-size:15.75px;letter-spacing:-0.62px;color:#3a3a3a">85</div><div class="t" style="left:243px;width:116.5px;text-align:right;top:712px;font-size:15.75px;letter-spacing:-0.62px;color:#3a3a3a">9</div><div class="t" style="left:376px;top:712px;font-size:15.75px;letter-spacing:-0.62px;color:#3a3a3a">Sick_y</div><div class="t" style="left:501px;top:712px;font-size:15.75px;letter-spacing:-0.62px;color:#3a3a3a">M</div><div class="t" style="left:626px;top:712px;font-size:15.75px;letter-spacing:-0.62px;color:#3a3a3a">Nausea_n</div><div class="a" style="left:0;top:761px;width:729px;height:1px;background:#dcdcdc"></div><div class="t" style="left:0;width:35px;text-align:center;top:739px;font-size:15.75px;letter-spacing:-0.62px;color:#555">29</div><div class="t" style="left:34px;width:75.5px;text-align:right;top:739px;font-size:15.75px;letter-spacing:-0.62px;color:#3a3a3a">29</div><div class="t" style="left:118px;width:116.5px;text-align:right;top:739px;font-size:15.75px;letter-spacing:-0.62px;color:#3a3a3a">88</div><div class="t" style="left:243px;width:116.5px;text-align:right;top:739px;font-size:15.75px;letter-spacing:-0.62px;color:#3a3a3a">0</div><div class="t" style="left:376px;top:739px;font-size:15.75px;letter-spacing:-0.62px;color:#3a3a3a">Sick_n</div><div class="t" style="left:501px;top:739px;font-size:15.75px;letter-spacing:-0.62px;color:#3a3a3a">F</div><div class="t" style="left:626px;top:739px;font-size:15.75px;letter-spacing:-0.62px;color:#3a3a3a">Nausea_n</div><div class="a" style="left:0;top:787px;width:729px;height:1px;background:#dcdcdc"></div><div class="t" style="left:0;width:35px;text-align:center;top:765px;font-size:15.75px;letter-spacing:-0.62px;color:#555">30</div><div class="t" style="left:34px;width:75.5px;text-align:right;top:765px;font-size:15.75px;letter-spacing:-0.62px;color:#3a3a3a">30</div><div class="t" style="left:118px;width:116.5px;text-align:right;top:765px;font-size:15.75px;letter-spacing:-0.62px;color:#3a3a3a">79</div><div class="t" style="left:243px;width:116.5px;text-align:right;top:765px;font-size:15.75px;letter-spacing:-0.62px;color:#3a3a3a">17</div><div class="t" style="left:376px;top:765px;font-size:15.75px;letter-spacing:-0.62px;color:#3a3a3a">Sick_y</div><div class="t" style="left:501px;top:765px;font-size:15.75px;letter-spacing:-0.62px;color:#3a3a3a">F</div><div class="t" style="left:626px;top:765px;font-size:15.75px;letter-spacing:-0.62px;color:#3a3a3a">Nausea_y</div><div class="a" style="left:0;top:813px;width:729px;height:1px;background:#dcdcdc"></div><div class="t" style="left:0;width:35px;text-align:center;top:791px;font-size:15.75px;letter-spacing:-0.62px;color:#555">31</div><div class="t" style="left:34px;width:75.5px;text-align:right;top:791px;font-size:15.75px;letter-spacing:-0.62px;color:#3a3a3a">31</div><div class="t" style="left:118px;width:116.5px;text-align:right;top:791px;font-size:15.75px;letter-spacing:-0.62px;color:#3a3a3a">9</div><div class="t" style="left:243px;width:116.5px;text-align:right;top:791px;font-size:15.75px;letter-spacing:-0.62px;color:#3a3a3a">9</div><div class="t" style="left:376px;top:791px;font-size:15.75px;letter-spacing:-0.62px;color:#3a3a3a">Sick_y</div><div class="t" style="left:501px;top:791px;font-size:15.75px;letter-spacing:-0.62px;color:#3a3a3a">F</div><div class="t" style="left:626px;top:791px;font-size:15.75px;letter-spacing:-0.62px;color:#3a3a3a">Nausea_n</div><div class="a" style="left:0;top:839px;width:729px;height:1px;background:#dcdcdc"></div><div class="t" style="left:0;width:35px;text-align:center;top:817px;font-size:15.75px;letter-spacing:-0.62px;color:#555">32</div><div class="t" style="left:34px;width:75.5px;text-align:right;top:817px;font-size:15.75px;letter-spacing:-0.62px;color:#3a3a3a">32</div><div class="t" style="left:118px;width:116.5px;text-align:right;top:817px;font-size:15.75px;letter-spacing:-0.62px;color:#3a3a3a">6</div><div class="t" style="left:243px;width:116.5px;text-align:right;top:817px;font-size:15.75px;letter-spacing:-0.62px;color:#3a3a3a">9</div><div class="t" style="left:376px;top:817px;font-size:15.75px;letter-spacing:-0.62px;color:#3a3a3a">Sick_y</div><div class="t" style="left:501px;top:817px;font-size:15.75px;letter-spacing:-0.62px;color:#3a3a3a">M</div><div class="t" style="left:626px;top:817px;font-size:15.75px;letter-spacing:-0.62px;color:#3a3a3a">Nausea_n</div><div class="a" style="left:242px;top:0;width:1px;height:823px;background:#dcdcdc"></div><div class="a" style="left:367px;top:0;width:1px;height:823px;background:#dcdcdc"></div><div class="a" style="left:492px;top:0;width:1px;height:823px;background:#dcdcdc"></div><div class="a" style="left:617px;top:0;width:1px;height:823px;background:#dcdcdc"></div><div class="a" style="left:117px;top:26px;width:1px;height:823px;background:#dcdcdc"></div><div class="a" style="left:34px;top:27px;width:1px;height:823px;background:#d0d0d0"></div></div>
<div class="a" style="left:729px;top:206px;width:21px;height:823px;background:#f0f0f0"></div>
<div class="a" style="left:731px;top:227px;width:17px;height:233px;background:#c1c1c1"></div>
<svg class="a" style="left:729px;top:206px" width="21" height="823"><path d="M6 14H15L10.5 9.5Z" fill="#a0a0a0"/><path d="M6 806H15L10.5 811Z" fill="#505050"/></svg>
<div class="a" style="left:750px;top:205px;width:1px;height:844px;background:#a0a0a0"></div>
<div class="a" style="left:0;top:1029px;width:729px;height:19px;background:#f0f0f0"></div>
<div class="a" style="left:37px;top:1030px;width:261px;height:17px;background:#c1c1c1"></div>
<svg class="a" style="left:0;top:1029px" width="729" height="20"><path d="M14 4V15L9 9.5Z" fill="#505050"/><path d="M715 4V15L720 9.5Z" fill="#505050"/></svg>
<div class="a" style="left:729px;top:1029px;width:21px;height:19px;background:#dcdcdc"></div>
<div class="a" style="left:0;top:1048px;width:751px;height:1px;background:#fafafa"></div>
<div class="a" style="left:0;top:1049px;width:751px;height:1px;background:#a8a8a8"></div>
<div class="a" style="left:751px;top:179px;width:17px;height:870px;background:#e4e4e4"></div>
<div class="a" style="left:768px;top:179px;width:1px;height:898px;background:#a8a8a8"></div>
<div class="a" style="left:758px;top:622px;width:4px;height:4px;border-radius:50%;background:#b0b0b0"></div>
<div class="a" style="left:758px;top:628px;width:4px;height:4px;border-radius:50%;background:#b0b0b0"></div>
<div class="a" style="left:758px;top:634px;width:4px;height:4px;border-radius:50%;background:#b0b0b0"></div>
<div class="a" style="left:0;top:1050px;width:768px;height:27px;background:#e8e8e8"></div>
<div class="a" style="left:61px;top:1050px;width:66px;height:27px;background:#efefef"></div>
<div class="a" style="left:0;top:1075px;width:768px;height:2px;background:#f4f4f4"></div>
<div class="t" style="left:13px;top:1058.5px;font-size:12.8px;color:#555">Pronto</div>
<div class="t" style="left:139px;top:1058.5px;font-size:12.8px;color:#555">Filtri 0</div>
<div class="t" style="left:314px;top:1058.5px;font-size:12.8px;color:#555">Numero righe 55</div>
<div class="t" style="left:433px;top:1058.5px;font-size:12.8px;color:#555">Filtrati 0</div>
<div class="t" style="left:501px;top:1058.5px;font-size:12.8px;color:#555">Eliminati 0</div>
<div class="t" style="left:582px;top:1058.5px;font-size:12.8px;color:#555">Aggiunti 0</div>
<div class="t" style="left:663px;top:1058.5px;font-size:12.8px;color:#555">Cells edited 0</div>
<svg class="a" style="left:61px;top:1049px" width="66" height="28"><path d="M9 6H25L19 15V24L15.5 21V15Z" fill="#8a8a8a"/><path d="M11.5 7.5H22.5L19 11.5H15Z" fill="#efefef"/><path d="M42 15C46 9 56 9 60 15C56 21 46 21 42 15Z" fill="none" stroke="#8a8a8a" stroke-width="1.6"/><circle cx="51" cy="15" r="2.8" fill="#8a8a8a"/></svg>
<div class="a" style="left:768px;top:179px;width:1150px;height:1px;background:#a8a8a8"></div>
<div class="a" style="left:769px;top:180px;width:1128px;height:876px;background:#fff;overflow:hidden" id="res">
<div class="t" style="left:27px;top:9px;font-size:14px;color:#333;font-weight:400;"></div><div class="t" style="left:121.70000000000005px;top:7.800000000000011px;font-size:14px;color:#333;font-weight:400;width:60px;text-align:center;">1</div><div class="t" style="left:213.5px;top:7.800000000000011px;font-size:14px;color:#333;font-weight:400;width:60px;text-align:center;">2</div><div class="t" style="left:310.5px;top:7.800000000000011px;font-size:14px;color:#333;font-weight:400;width:60px;text-align:center;">3</div><div class="t" style="left:404.5px;top:7.800000000000011px;font-size:14px;color:#333;font-weight:400;width:60px;text-align:center;">4</div><div class="t" style="left:493.29999999999995px;top:7.800000000000011px;font-size:14px;color:#333;font-weight:400;width:60px;text-align:center;">5</div><div class="a" style="left:27px;top:29px;width:541px;height:1px;background:#333"></div><div class="t" style="left:37px;top:43.5px;font-size:14px;color:#333;font-weight:400;">Age</div><div class="t" style="left:37px;top:73px;font-size:14px;color:#333;font-weight:400;">Time</div><div class="t" style="left:80px;top:42.5px;font-size:14px;color:#333;font-weight:400;width:90px;text-align:right;">−0.0257</div><div class="t" style="left:80px;top:72px;font-size:14px;color:#333;font-weight:400;width:90px;text-align:right;">0.9375</div><div class="t" style="left:178px;top:42.5px;font-size:14px;color:#333;font-weight:400;width:90px;text-align:right;">0.72424</div><div class="t" style="left:178px;top:72px;font-size:14px;color:#333;font-weight:400;width:90px;text-align:right;">−0.00310</div><div class="t" style="left:274.5999999999999px;top:42.5px;font-size:14px;color:#333;font-weight:400;width:90px;text-align:right;">0.68755</div><div class="t" style="left:274.5999999999999px;top:72px;font-size:14px;color:#333;font-weight:400;width:90px;text-align:right;">−0.00989</div><div class="t" style="left:363.79999999999995px;top:42.5px;font-size:14px;color:#333;font-weight:400;width:90px;text-align:right;">0.0309</div><div class="t" style="left:363.79999999999995px;top:72px;font-size:14px;color:#333;font-weight:400;width:90px;text-align:right;">−0.1420</div><div class="t" style="left:452.29999999999995px;top:42.5px;font-size:14px;color:#333;font-weight:400;width:90px;text-align:right;">−0.0189</div><div class="t" style="left:452.29999999999995px;top:72px;font-size:14px;color:#333;font-weight:400;width:90px;text-align:right;">0.1873</div><div class="a" style="left:27px;top:100px;width:541px;height:2px;background:#333"></div><div class="t" style="left:27px;top:141.5px;font-size:18.9px;color:#3a68a3;font-weight:700;">Scree plot</div><div class="t" style="left:629.5px;top:168px;font-size:11.5px;color:#222;font-weight:400;-webkit-text-stroke:0.25px #222;">[3]</div><div class="t" style="left:27px;top:845px;font-size:19px;color:#3a68a3;font-weight:700;">Variable groups</div><div class="t" style="left:629.5px;top:872px;font-size:11.5px;color:#222;font-weight:400;-webkit-text-stroke:0.25px #222;">[3]</div>
</div>
<svg class="a" style="left:0;top:0" width="1920" height="1080" ><rect x="874.3" y="415.9" width="528.2" height="495" fill="#ebebeb"/><path d="M874.3 843.78H1402.5" stroke="#fff" stroke-width="0.8"/><path d="M874.3 753.74H1402.5" stroke="#fff" stroke-width="0.8"/><path d="M874.3 663.70H1402.5" stroke="#fff" stroke-width="0.8"/><path d="M874.3 573.66H1402.5" stroke="#fff" stroke-width="0.8"/><path d="M874.3 483.62H1402.5" stroke="#fff" stroke-width="0.8"/><path d="M874.3 888.80H1402.5" stroke="#fff" stroke-width="1.6"/><path d="M874.3 798.76H1402.5" stroke="#fff" stroke-width="1.6"/><path d="M874.3 708.72H1402.5" stroke="#fff" stroke-width="1.6"/><path d="M874.3 618.68H1402.5" stroke="#fff" stroke-width="1.6"/><path d="M874.3 528.64H1402.5" stroke="#fff" stroke-width="1.6"/><path d="M874.3 438.60H1402.5" stroke="#fff" stroke-width="1.6"/><path d="M905.20 415.9V910.9" stroke="#fff" stroke-width="1.6"/><path d="M957.01 415.9V910.9" stroke="#fff" stroke-width="1.6"/><path d="M1008.82 415.9V910.9" stroke="#fff" stroke-width="1.6"/><path d="M1060.63 415.9V910.9" stroke="#fff" stroke-width="1.6"/><path d="M1112.44 415.9V910.9" stroke="#fff" stroke-width="1.6"/><path d="M1164.25 415.9V910.9" stroke="#fff" stroke-width="1.6"/><path d="M1216.06 415.9V910.9" stroke="#fff" stroke-width="1.6"/><path d="M1267.87 415.9V910.9" stroke="#fff" stroke-width="1.6"/><path d="M1319.68 415.9V910.9" stroke="#fff" stroke-width="1.6"/><path d="M1371.49 415.9V910.9" stroke="#fff" stroke-width="1.6"/><rect x="881.90" y="438.60" width="46.6" height="450.20" fill="#4682b4"/><rect x="933.71" y="720.43" width="46.6" height="168.37" fill="#4682b4"/><rect x="985.52" y="735.73" width="46.6" height="153.07" fill="#4682b4"/><rect x="1037.33" y="843.78" width="46.6" height="45.02" fill="#4682b4"/><rect x="1089.14" y="848.28" width="46.6" height="40.52" fill="#4682b4"/><rect x="1140.95" y="865.39" width="46.6" height="23.41" fill="#4682b4"/><rect x="1192.76" y="878.90" width="46.6" height="9.90" fill="#4682b4"/><rect x="1244.57" y="881.60" width="46.6" height="7.20" fill="#4682b4"/><rect x="1296.38" y="886.10" width="46.6" height="2.70" fill="#4682b4"/><rect x="1348.19" y="888.35" width="46.6" height="0.45" fill="#4682b4"/><polyline points="905.20,438.60 957.01,720.43 1008.82,735.73 1060.63,843.78 1112.44,848.28 1164.25,865.39 1216.06,878.90 1267.87,881.60 1319.68,886.10 1371.49,888.35" fill="none" stroke="#000" stroke-width="1.1"/><circle cx="905.20" cy="438.60" r="2.6" fill="#000"/><text x="905.20" y="434.10" font-family="Liberation Sans" font-size="12.7" fill="#1a1a1a">50%</text><circle cx="957.01" cy="720.43" r="2.6" fill="#000"/><text x="957.01" y="715.93" font-family="Liberation Sans" font-size="12.7" fill="#1a1a1a">18.7%</text><circle cx="1008.82" cy="735.73" r="2.6" fill="#000"/><text x="1008.82" y="731.23" font-family="Liberation Sans" font-size="12.7" fill="#1a1a1a">17%</text><circle cx="1060.63" cy="843.78" r="2.6" fill="#000"/><text x="1060.63" y="839.28" font-family="Liberation Sans" font-size="12.7" fill="#1a1a1a">5%</text><circle cx="1112.44" cy="848.28" r="2.6" fill="#000"/><text x="1112.44" y="843.78" font-family="Liberation Sans" font-size="12.7" fill="#1a1a1a">4.5%</text><circle cx="1164.25" cy="865.39" r="2.6" fill="#000"/><text x="1164.25" y="860.89" font-family="Liberation Sans" font-size="12.7" fill="#1a1a1a">2.6%</text><circle cx="1216.06" cy="878.90" r="2.6" fill="#000"/><text x="1216.06" y="874.40" font-family="Liberation Sans" font-size="12.7" fill="#1a1a1a">1.1%</text><circle cx="1267.87" cy="881.60" r="2.6" fill="#000"/><text x="1267.87" y="877.10" font-family="Liberation Sans" font-size="12.7" fill="#1a1a1a">0.8%</text><circle cx="1319.68" cy="886.10" r="2.6" fill="#000"/><text x="1319.68" y="881.60" font-family="Liberation Sans" font-size="12.7" fill="#1a1a1a">0.3%</text><circle cx="1371.49" cy="888.35" r="2.6" fill="#000"/><text x="1371.49" y="883.85" font-family="Liberation Sans" font-size="12.7" fill="#1a1a1a">0%</text><path d="M869.3 888.80H874.3" stroke="#333" stroke-width="1.6"/><text x="862" y="894.30" text-anchor="end" font-family="Liberation Sans" font-size="15.2" fill="#4d4d4d">0</text><path d="M869.3 798.76H874.3" stroke="#333" stroke-width="1.6"/><text x="862" y="804.26" text-anchor="end" font-family="Liberation Sans" font-size="15.2" fill="#4d4d4d">10</text><path d="M869.3 708.72H874.3" stroke="#333" stroke-width="1.6"/><text x="862" y="714.22" text-anchor="end" font-family="Liberation Sans" font-size="15.2" fill="#4d4d4d">20</text><path d="M869.3 618.68H874.3" stroke="#333" stroke-width="1.6"/><text x="862" y="624.18" text-anchor="end" font-family="Liberation Sans" font-size="15.2" fill="#4d4d4d">30</text><path d="M869.3 528.64H874.3" stroke="#333" stroke-width="1.6"/><text x="862" y="534.14" text-anchor="end" font-family="Liberation Sans" font-size="15.2" fill="#4d4d4d">40</text><path d="M869.3 438.60H874.3" stroke="#333" stroke-width="1.6"/><text x="862" y="444.10" text-anchor="end" font-family="Liberation Sans" font-size="15.2" fill="#4d4d4d">50</text><path d="M905.20 910.9V915.9" stroke="#333" stroke-width="1.6"/><text x="905.20" y="936" text-anchor="middle" font-family="Liberation Sans" font-size="15.2" fill="#4d4d4d">1</text><path d="M957.01 910.9V915.9" stroke="#333" stroke-width="1.6"/><text x="957.01" y="936" text-anchor="middle" font-family="Liberation Sans" font-size="15.2" fill="#4d4d4d">2</text><path d="M1008.82 910.9V915.9" stroke="#333" stroke-width="1.6"/><text x="1008.82" y="936" text-anchor="middle" font-family="Liberation Sans" font-size="15.2" fill="#4d4d4d">3</text><path d="M1060.63 910.9V915.9" stroke="#333" stroke-width="1.6"/><text x="1060.63" y="936" text-anchor="middle" font-family="Liberation Sans" font-size="15.2" fill="#4d4d4d">4</text><path d="M1112.44 910.9V915.9" stroke="#333" stroke-width="1.6"/><text x="1112.44" y="936" text-anchor="middle" font-family="Liberation Sans" font-size="15.2" fill="#4d4d4d">5</text><path d="M1164.25 910.9V915.9" stroke="#333" stroke-width="1.6"/><text x="1164.25" y="936" text-anchor="middle" font-family="Liberation Sans" font-size="15.2" fill="#4d4d4d">6</text><path d="M1216.06 910.9V915.9" stroke="#333" stroke-width="1.6"/><text x="1216.06" y="936" text-anchor="middle" font-family="Liberation Sans" font-size="15.2" fill="#4d4d4d">7</text><path d="M1267.87 910.9V915.9" stroke="#333" stroke-width="1.6"/><text x="1267.87" y="936" text-anchor="middle" font-family="Liberation Sans" font-size="15.2" fill="#4d4d4d">8</text><path d="M1319.68 910.9V915.9" stroke="#333" stroke-width="1.6"/><text x="1319.68" y="936" text-anchor="middle" font-family="Liberation Sans" font-size="15.2" fill="#4d4d4d">9</text><path d="M1371.49 910.9V915.9" stroke="#333" stroke-width="1.6"/><text x="1371.49" y="936" text-anchor="middle" font-family="Liberation Sans" font-size="15.2" fill="#4d4d4d">10</text><text x="1138.4" y="965" text-anchor="middle" font-family="Liberation Sans" font-size="19.6" fill="#333">Dimensions</text><text x="1138.4" y="396" text-anchor="middle" font-family="Liberation Sans" font-size="20" fill="#333">Scree plot</text><text transform="translate(831 663.4) rotate(-90)" text-anchor="middle" font-family="Liberation Sans" font-size="20" fill="#333">Percentage of explained variances</text></svg>
<div class="a" style="left:1897px;top:180px;width:21px;height:876px;background:#f0f0f0"></div>
<div class="a" style="left:1899px;top:451px;width:17px;height:70px;background:#c1c1c1"></div>
<svg class="a" style="left:1897px;top:180px" width="21" height="876"><path d="M6 14.5H15L10.5 9.5Z" fill="#404040"/><path d="M6 861H15L10.5 866Z" fill="#404040"/></svg>
<div class="a" style="left:768px;top:1056px;width:1129px;height:18px;background:#f0f0f0"></div>
<div class="a" style="left:768px;top:1074px;width:1150px;height:3px;background:#f8f8f8"></div>
<svg class="a" style="left:768px;top:1056px" width="1129" height="18"><path d="M15 5V14L10.5 9.5Z" fill="#a0a0a0"/><path d="M1115 5V14L1119.5 9.5Z" fill="#a0a0a0"/></svg>
<div class="a" style="left:1897px;top:1056px;width:21px;height:18px;background:#dcdcdc"></div>
<div class="a" style="left:1913px;top:78px;width:5px;height:91px;background:#f5f5f5"></div>
<div class="a" style="left:1917px;top:180px;width:1px;height:897px;background:#f8f8f8"></div>
<div class="a" style="left:0;top:78px;width:1px;height:999px;background:#2f5a8e"></div>
<div class="a" style="left:1918px;top:78px;width:2px;height:999px;background:#3a66a0"></div>
<div class="a" style="left:0;top:1077px;width:1920px;height:3px;background:#111"></div>
</body></html>
